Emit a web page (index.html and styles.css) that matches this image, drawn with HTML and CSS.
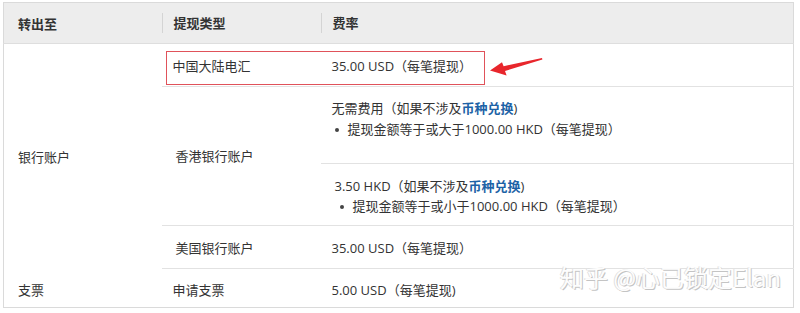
FILE: index.html
```html
<!DOCTYPE html>
<html lang="zh-CN">
<head>
<meta charset="utf-8">
<title>费率</title>
<link rel="stylesheet" href="styles.css">
</head>
<body>
<div class="page">
  <table class="fees">
    <colgroup>
      <col class="w1">
      <col class="w2">
      <col>
    </colgroup>
    <thead>
      <tr>
        <th class="h1">转出至</th>
        <th><span class="sep">提现类型</span></th>
        <th><span class="sep">费率</span></th>
      </tr>
    </thead>
    <tbody>
      <tr class="r1">
        <td class="c1" rowspan="3">银行账户</td>
        <td class="c2">中国大陆电汇</td>
        <td class="c3">35.00 USD（每笔提现）</td>
      </tr>
      <tr>
        <td class="c2 shift">香港银行账户</td>
        <td class="c3 multi">
          <div class="blk blk1">
            <div>无需费用（如果不涉及<a class="lnk" href="#">币种兑换</a>)</div>
            <ul class="bul">
              <li><span class="dot"></span><span>提现金额等于或大于1000.00 HKD（每笔提现）</span></li>
            </ul>
          </div>
          <div class="blk blk2">
            <div>3.50 HKD（如果不涉及<a class="lnk" href="#">币种兑换</a>)</div>
            <ul class="bul">
              <li><span class="dot"></span><span>提现金额等于或小于1000.00 HKD（每笔提现）</span></li>
            </ul>
          </div>
        </td>
      </tr>
      <tr class="r3">
        <td class="c2 shift">美国银行账户</td>
        <td class="c3">35.00 USD（每笔提现）</td>
      </tr>
      <tr class="r4">
        <td class="c1">支票</td>
        <td class="c2">申请支票</td>
        <td class="c3">5.00 USD（每笔提现)</td>
      </tr>
    </tbody>
  </table>

  <div class="highlight"></div>
  <svg class="arrow" width="70" height="30" viewBox="480 50 70 30" aria-hidden="true">
    <polygon points="490,70.5 502,62.3 503.6,66.2 542,58 542.4,59.6 505,70.9 506.6,75.6" fill="#e8262c"/>
  </svg>
  <div class="watermark">知乎 @心已锁定Elan</div>
</div>
</body>
</html>
```

FILE: styles.css
```css
html, body {
  margin: 0;
  padding: 0;
  background: #fff;
}

body {
  font-family: "Open Sans", "Noto Sans CJK SC", sans-serif;
  font-size: 13px;
  color: #333;
}

.page {
  position: relative;
  width: 800px;
  height: 313px;
  padding: 2px 0 0 3px;
  box-sizing: border-box;
  overflow: hidden;
}

.fees {
  border-collapse: collapse;
  table-layout: fixed;
  width: 791px;
  border: 1px solid #dadada;
}

.w1 { width: 158px; }
.w2 { width: 159px; }

.fees th {
  height: 40px;
  padding: 0;
  background: #ededed;
  text-align: left;
  font-weight: bold;
  vertical-align: middle;
  border-bottom: 1px solid #dedede;
}

.fees th.h1 {
  padding-left: 14px;
}

.sep {
  display: block;
  border-left: 1px solid #d4d4d4;
  padding-left: 11px;
  line-height: 20px;
}

.fees td {
  padding: 0;
  vertical-align: middle;
  line-height: 20px;
}

.c1 {
  padding-left: 14px !important;
}

.c2, .c3 {
  padding-left: 11px !important;
  border-bottom: 1px solid #e2e2e2;
}

.c2.shift {
  padding-left: 14px !important;
}

.r1 td { height: 40px; padding-top: 2px !important; }
.r3 td { height: 40px; padding-top: 2px !important; }
.r4 td { height: 34px; padding-top: 4px !important; border-bottom: none; }

.c3.multi {
  padding-left: 0 !important;
  padding-top: 0 !important;
}

.blk1 {
  height: 65px;
  padding: 11px 0 0 11px;
  line-height: 21px;
  border-bottom: 1px solid #e2e2e2;
}

.blk2 {
  height: 49px;
  padding: 12px 0 0 14px;
  line-height: 20px;
}

.bul {
  margin: 0;
  padding: 0;
  list-style: none;
}

.bul li {
  display: flex;
  align-items: center;
}

.dot {
  flex: none;
  width: 4px;
  height: 4px;
  border-radius: 50%;
  background: #444;
  margin: 1px 9px 0 3px;
}

.blk2 .dot {
  margin-left: 5px;
}

.lnk {
  color: #1d62a6;
  font-weight: bold;
  text-decoration: none;
}

.highlight {
  position: absolute;
  left: 166px;
  top: 51px;
  width: 317px;
  height: 32px;
  border: 1px solid #e0525a;
}

.arrow {
  position: absolute;
  left: 480px;
  top: 50px;
}

.watermark {
  position: absolute;
  left: 560px;
  top: 262px;
  font-family: "Noto Sans CJK SC", sans-serif;
  font-size: 24px;
  line-height: 30px;
  color: #fdfdfd;
  text-shadow: 1px 1px 0 #c4c4c4, -1px 0 0 #e0e0e0;
  white-space: nowrap;
}
```
